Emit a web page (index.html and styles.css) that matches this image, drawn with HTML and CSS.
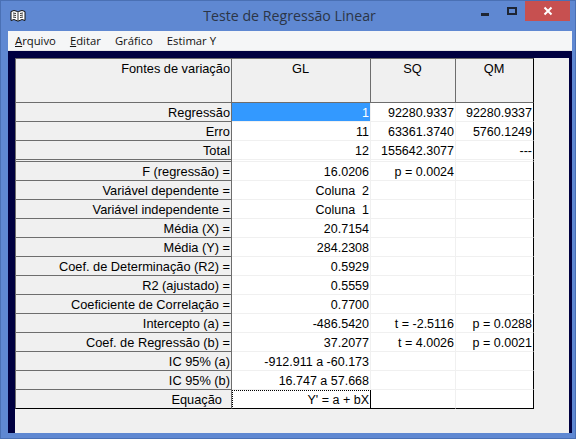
FILE: index.html
```html
<!DOCTYPE html>
<html lang="pt">
<head>
  <meta charset="UTF-8" />
  <title>Teste de Regressão Linear</title>
  <link rel="stylesheet" href="styles.css">
</head>
<body>
  <div class="window">
    <div class="titlebar">
      <svg class="app-icon" width="16" height="14" viewBox="0 0 16 14">
        <path d="M1 2.5 L4 1.5 L7.5 2.5 L8 3 L8.5 2.5 L12 1.5 L15 2.5 V11.5 L12 10.5 L8.5 12 H7.5 L4 10.5 L1 11.5 Z" fill="#fff" stroke="#111" stroke-width="1"/>
        <path d="M8 3 V12 M3 4 L6 4.5 M3 6 L6 6.5 M3 8 L6 8.5 M10 4.5 L13 4 M10 6.5 L13 6 M10 8.5 L13 8" stroke="#333" stroke-width="1" fill="none"/>
      </svg>
      <span class="title">Teste de Regressão Linear</span>
      <div class="controls">
        <span class="btn-min"></span>
        <span class="btn-max"></span>
        <span class="btn-close">
          <svg width="10" height="10" viewBox="0 0 10 10"><path d="M1.5 1.5 L8.5 8.5 M8.5 1.5 L1.5 8.5" stroke="#fff" stroke-width="2"/></svg>
        </span>
      </div>
    </div>

    <div class="client">
      <div class="menubar">
        <span><u>A</u>rquivo</span>
        <span><u>E</u>ditar</span>
        <span>Gráfico</span>
        <span>Estimar Y</span>
      </div>

      <div class="frame">
        <div class="grid-area">
          <table class="grid">
            <colgroup>
              <col class="col-label"><col class="col-gl"><col class="col-sq"><col class="col-qm">
            </colgroup>
            <tr class="head">
              <th>Fontes de variação</th>
              <th class="center">GL</th>
              <th class="center">SQ</th>
              <th class="center">QM</th>
            </tr>
            <tr>
              <th>Regressão</th><td class="selected">1</td><td>92280.9337</td><td>92280.9337</td>
            </tr>
            <tr>
              <th>Erro</th><td>11</td><td>63361.3740</td><td>5760.1249</td>
            </tr>
            <tr>
              <th>Total</th><td>12</td><td>155642.3077</td><td>---</td>
            </tr>
            <tr class="gap"><th></th><td></td><td></td><td></td></tr>
            <tr>
              <th>F (regressão) =</th><td>16.0206</td><td>p = 0.0024</td><td></td>
            </tr>
            <tr>
              <th>Variável dependente =</th><td>Coluna&nbsp; 2</td><td></td><td></td>
            </tr>
            <tr>
              <th>Variável independente =</th><td>Coluna&nbsp; 1</td><td></td><td></td>
            </tr>
            <tr><th>Média (X) =</th><td>20.7154</td><td></td><td></td></tr>
            <tr><th>Média (Y) =</th><td>284.2308</td><td></td><td></td></tr>
            <tr><th>Coef. de Determinação (R2) =</th><td>0.5929</td><td></td><td></td></tr>
            <tr><th>R2 (ajustado) =</th><td>0.5559</td><td></td><td></td></tr>
            <tr><th>Coeficiente de Correlação =</th><td>0.7700</td><td></td><td></td></tr>
            <tr>
              <th>Intercepto (a) =</th><td>-486.5420</td><td>t = -2.5116</td><td>p = 0.0288</td>
            </tr>
            <tr>
              <th>Coef. de Regressão (b) =</th><td>37.2077</td><td>t = 4.0026</td><td>p = 0.0021</td>
            </tr>
            <tr><th>IC 95% (a)</th><td>-912.911 a -60.173</td><td></td><td></td></tr>
            <tr><th>IC 95% (b)</th><td>16.747 a 57.668</td><td></td><td></td></tr>
            <tr class="last">
              <th class="pad">Equação</th><td class="focused">Y' = a + bX</td><td></td><td></td>
            </tr>
          </table>
        </div>
      </div>
    </div>
  </div>
</body>
</html>
```

FILE: styles.css
```css
* { box-sizing: border-box; }
html, body { margin: 0; height: 100%; }
body { font-family: "Liberation Sans", Arial, sans-serif; font-size: 12px; color: #000; overflow: hidden; }

.window {
  width: 576px; height: 439px;
  background: #5f88d2;
  border: 1px solid #4a70b4;
  padding: 0 3px 5px 7px;
  display: flex; flex-direction: column;
}

/* barra de titulo */
.titlebar { height: 30px; display: flex; align-items: center; position: relative; flex: none; }
.app-icon { margin: 0 0 0 2px; }
.title {
  position: absolute; left: 0; right: 0; top: 5px;
  text-align: center; padding-right: 1px;
  font-family: "Open Sans", sans-serif; font-size: 14.2px; line-height: 20px;
  color: #2b3547;
}
.controls { position: absolute; top: 0; right: 2px; display: flex; align-items: flex-start; }
.btn-min { width: 8px; height: 3px; background: #1e2533; margin: 12px 18px 0 0; }
.btn-max { width: 10px; height: 8px; border: 2px solid #1e2533; margin: 6px 8px 0 0; }
.btn-close {
  width: 45px; height: 20px; background: #c75050;
  display: flex; align-items: center; justify-content: center;
}

.client { flex: 1; display: flex; flex-direction: column; min-height: 0; }

.menubar {
  height: 20px; flex: none;
  background: #f5f6f7;
  border-bottom: 1px solid #e6e6e6;
  display: flex; align-items: center;
  padding-left: 7px; gap: 14px;
  font-family: "Open Sans", sans-serif; font-size: 11.3px;
  color: #111;
}

.frame {
  flex: 1; min-height: 0;
  background: #000040;
  padding: 7px 3px 0 7px;
}
.grid-area { height: 100%; background: #f0f0f0; }

/* grade */
.grid { border-collapse: separate; border-spacing: 0; table-layout: fixed; width: 519px; }
.col-label { width: 217px; }
.col-gl { width: 139px; }
.col-sq { width: 85px; }
.col-qm { width: 78px; }

.grid th, .grid td {
  height: 19px; padding: 1px 1px 0 0;
  font-weight: normal; line-height: 14px;
  text-align: right; white-space: nowrap; overflow: hidden;
}
.grid th {
  font-size: 12.8px;
  background: #f0f0f0;
  border-right: 1px solid #6d6d6d;
  border-bottom: 1px solid #6d6d6d;
}
.grid td {
  font-size: 12.5px;
  background: #fff;
  border-right: 1px solid #f0f0f0;
  border-bottom: 1px solid #f0f0f0;
}
.grid tr > :last-child { border-right-color: #000; }

.head th { height: 45px; vertical-align: top; padding-top: 3px; border-top: 1px solid #6d6d6d; }
.head th:last-child { border-right-color: #000; }

.grid th:first-child { border-left: 1px solid #6d6d6d; }

.grid .center { text-align: center; }
.grid .pad { padding-right: 9px; }

.grid tr.gap th, .grid tr.gap td { height: 2px; padding: 0; font-size: 0; line-height: 0; }

.grid td.selected { background: #3399ff; color: #fff; }
.grid td.focused { outline: 1px dotted #000; outline-offset: -1px; border-right-color: #000; }

.grid tr.last th, .grid tr.last td { border-bottom-color: #000; }
```
